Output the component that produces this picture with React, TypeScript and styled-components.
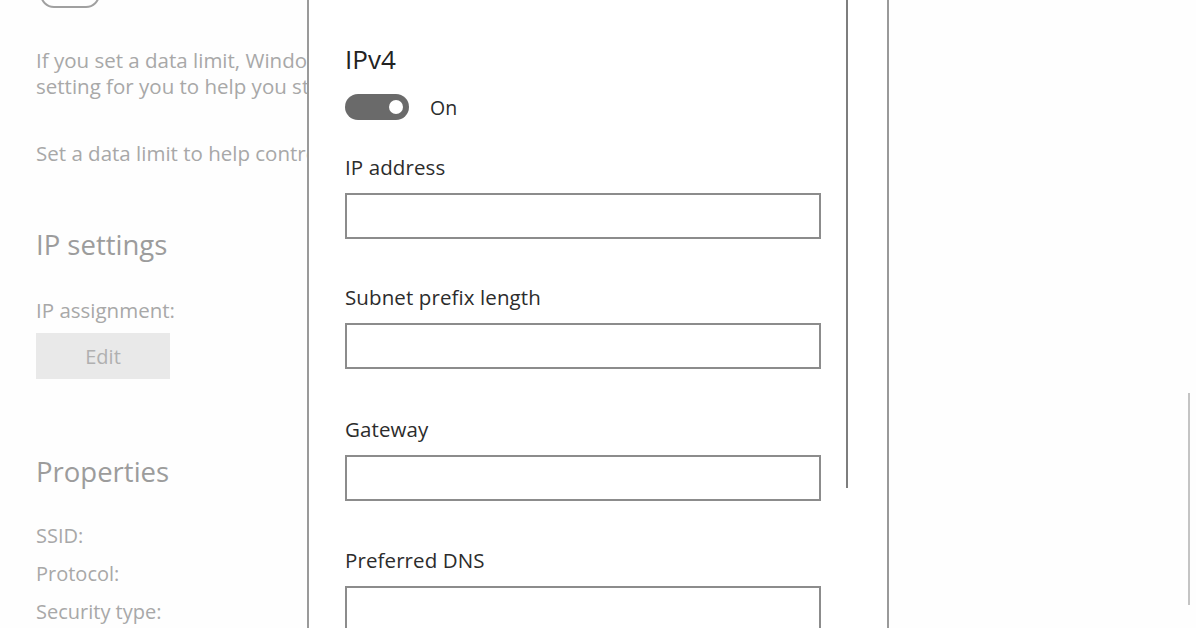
import React from "react";
import styled, { createGlobalStyle } from "styled-components";

const GlobalStyle = createGlobalStyle`
  html, body {
    margin: 0;
    padding: 0;
    background: #fefefe;
    font-family: "Open Sans", "Noto Sans", "Liberation Sans", sans-serif;
  }
`;

const Page = styled.div`
  display: flex;
  width: 1196px;
  height: 628px;
  overflow: hidden;
  background: #fefefe;
`;

const Background = styled.div`
  width: 271px;
  flex-shrink: 0;
  padding-left: 36px;
  overflow: hidden;
  white-space: nowrap;
  color: #a8a8a8;
`;

const ToggleOutline = styled.div`
  width: 56px;
  height: 28px;
  margin: -24px 0 0 4px;
  border: 2px solid #a0a0a0;
  border-radius: 14px;
`;

const Faint = styled.p<{ $top?: number }>`
  margin: ${(p) => p.$top ?? 0}px 0 0;
  font-size: 20.5px;
  line-height: 26px;
`;

const SectionTitle = styled.h2<{ $top: number }>`
  margin: ${(p) => p.$top}px 0 0;
  font-size: 27.5px;
  line-height: 32px;
  font-weight: 400;
  color: #9c9c9c;
`;

const EditButton = styled.div`
  width: 134px;
  height: 46px;
  margin-top: 10px;
  background: #e9e9e9;
  display: flex;
  align-items: center;
  justify-content: center;
  font-size: 20px;
  color: #b0b0b0;
`;

const PropList = styled.div`
  margin-top: 29px;
  display: flex;
  flex-direction: column;
  font-size: 20px;
  line-height: 38px;
`;

const Dialog = styled.div`
  width: 578px;
  flex-shrink: 0;
  display: flex;
  border-left: 2px solid #9a9a9a;
  border-right: 2px solid #9a9a9a;
  background: #fff;
  color: #2c2c2c;
`;

const DialogBody = styled.div`
  width: 501px;
  padding-left: 36px;
  padding-top: 44px;
`;

const Heading = styled.div`
  font-size: 26px;
  line-height: 30px;
  color: #222;
`;

const ToggleRow = styled.div`
  display: flex;
  align-items: center;
  gap: 21px;
  margin-top: 20px;
  height: 26px;
  font-size: 19.5px;
`;

const Switch = styled.div`
  width: 64px;
  height: 26px;
  border-radius: 13px;
  background: #6a6a6a;
  display: flex;
  align-items: center;
  justify-content: flex-end;
  padding-right: 6px;
  box-sizing: border-box;
`;

const Knob = styled.div`
  width: 14px;
  height: 14px;
  border-radius: 50%;
  background: #fff;
`;

const Field = styled.div<{ $top: number }>`
  margin-top: ${(p) => p.$top}px;
  display: flex;
  flex-direction: column;
  gap: 14px;
`;

const Label = styled.div`
  font-size: 20.5px;
  line-height: 24px;
  letter-spacing: 0.1px;
`;

const Input = styled.div`
  width: 476px;
  height: 46px;
  box-sizing: border-box;
  border: 2px solid #8c8c8c;
  background: #fff;
`;

const DialogScroll = styled.div`
  flex: 1;
`;

const DialogThumb = styled.div`
  width: 2px;
  height: 488px;
  background: #7e7e7e;
`;

const RightArea = styled.div`
  flex: 1;
  display: flex;
  justify-content: flex-end;
  padding-right: 6px;
`;

const PageThumb = styled.div`
  width: 2px;
  height: 212px;
  margin-top: 393px;
  background: #c4c4c4;
`;

const fields = [
  { label: "IP address", top: 35 },
  { label: "Subnet prefix length", top: 46 },
  { label: "Gateway", top: 48 },
  { label: "Preferred DNS", top: 47 },
];

const App = () => {
  return (
    <Page>
      <GlobalStyle />
      <Background>
        <ToggleOutline />
        <Faint $top={39}>
          If you set a data limit, Windows will set the metered connection
          <br />
          setting for you to help you stay under your limit.
        </Faint>
        <Faint $top={41}>Set a data limit to help control data usage on this network.</Faint>
        <SectionTitle $top={63}>IP settings</SectionTitle>
        <Faint $top={36}>IP assignment:</Faint>
        <EditButton>Edit</EditButton>
        <SectionTitle $top={77}>Properties</SectionTitle>
        <PropList>
          <span>SSID:</span>
          <span>Protocol:</span>
          <span>Security type:</span>
        </PropList>
      </Background>
      <Dialog>
        <DialogBody>
          <Heading>IPv4</Heading>
          <ToggleRow>
            <Switch>
              <Knob />
            </Switch>
            On
          </ToggleRow>
          {fields.map((f) => (
            <Field key={f.label} $top={f.top}>
              <Label>{f.label}</Label>
              <Input />
            </Field>
          ))}
        </DialogBody>
        <DialogScroll>
          <DialogThumb />
        </DialogScroll>
      </Dialog>
      <RightArea>
        <PageThumb />
      </RightArea>
    </Page>
  );
};

export default App;
